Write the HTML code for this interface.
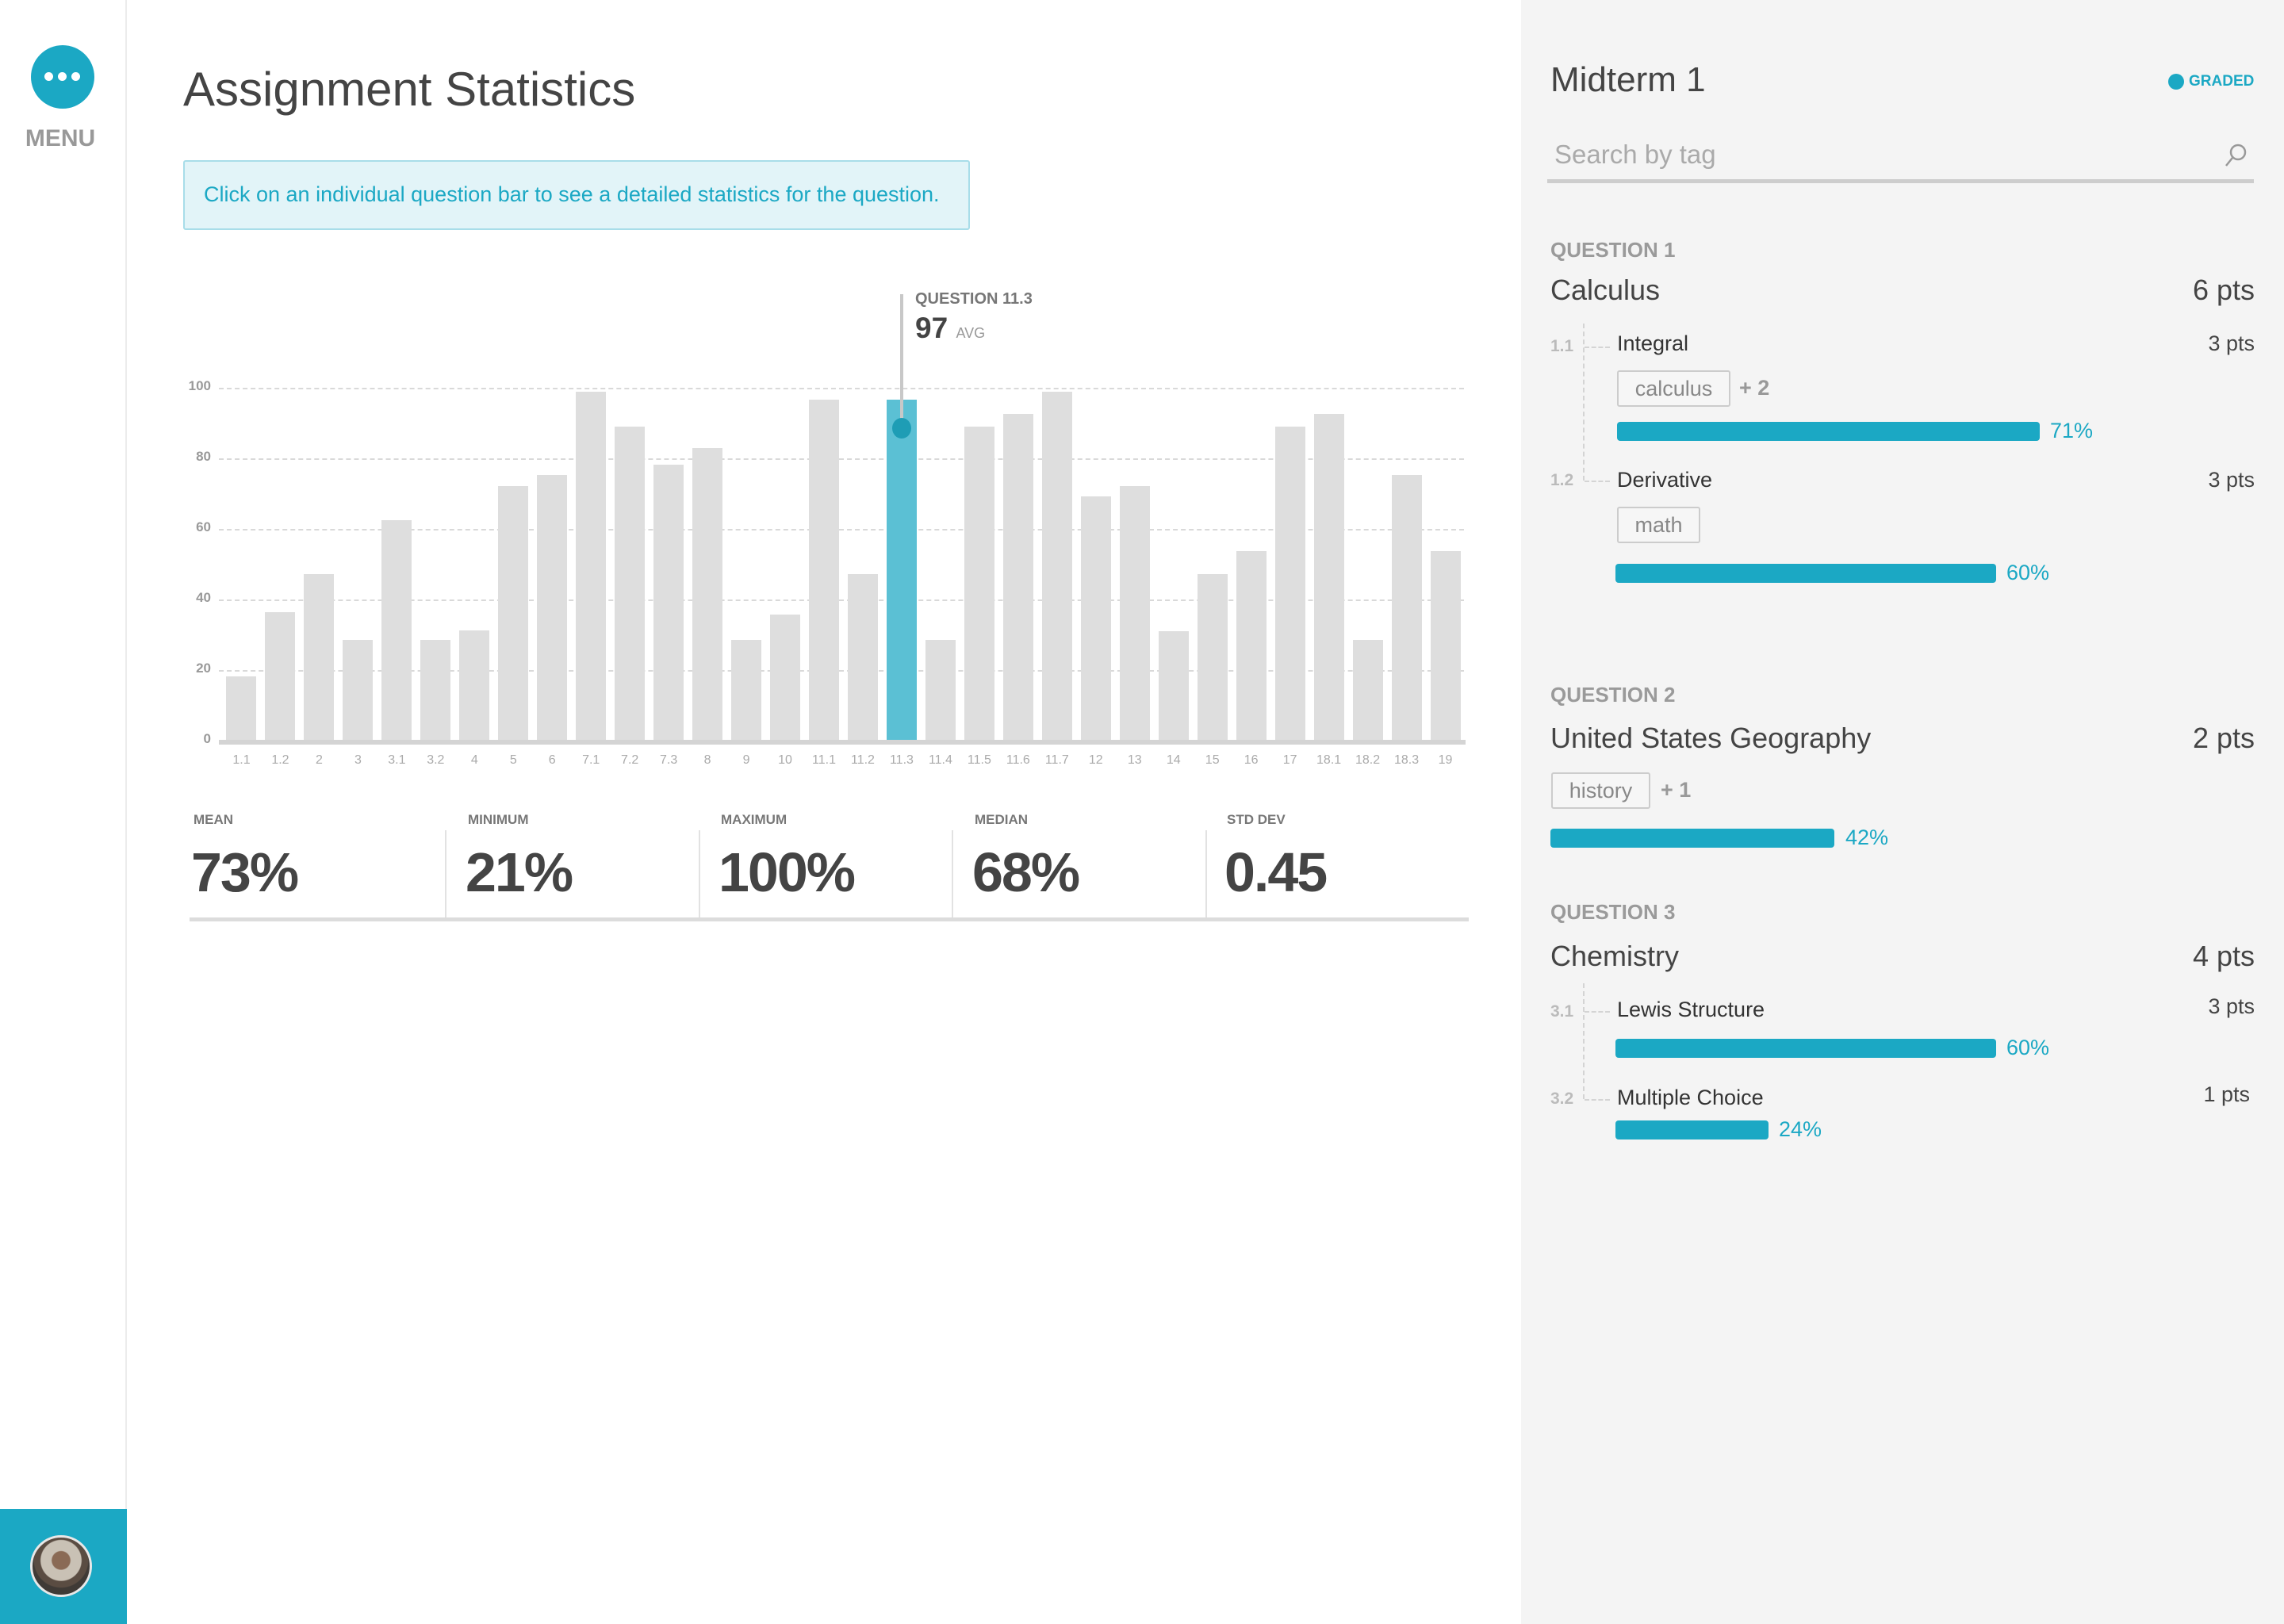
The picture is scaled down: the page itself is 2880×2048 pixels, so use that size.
<!DOCTYPE html>
<html><head><meta charset="utf-8"><style>
*{margin:0;padding:0;box-sizing:border-box}
body{width:2880px;height:2048px;position:relative;background:#fff;font-family:"Liberation Sans",sans-serif;overflow:hidden}
.a{position:absolute}
.side{left:0;top:0;width:160px;height:2048px;border-right:2px solid #ececec;background:#fff}
.grid{left:276px;width:1570px;border-top:2px dashed #d9d9d9;height:0}
.yl{left:226px;width:40px;text-align:right;font-size:17px;color:#999;font-weight:bold}
.bars{left:280px;top:400px;width:1567px;height:535px;display:flex;align-items:flex-end}
.bars div{flex:1;display:flex;justify-content:center;align-items:flex-end;height:100%}
.bars span{width:38px;background:#dedede;display:block}
.xl{left:280px;top:950px;width:1567px;display:flex;font-size:16px;color:#aaa}
.xl span{flex:1;text-align:center}
.sl{font-size:17px;font-weight:bold;color:#777;top:1024px}
.sv{font-size:70px;font-weight:bold;color:#444;top:1060px;letter-spacing:-2px}
.sep{top:1047px;width:2px;height:112px;background:#e2e2e2}
.right{left:1918px;top:0;width:962px;height:2048px;background:#f4f4f4}
.qh{font-size:26px;font-weight:bold;color:#9a9a9a;left:1955px}
.qt{font-size:36px;color:#444;left:1955px}
.pts{right:38px;color:#444}
.sub{font-size:27px;color:#333;left:2039px}
.num{font-size:21px;color:#bbb;font-weight:bold;left:1955px}
.tag{border:2px solid #ccc;border-radius:3px;font-size:27px;color:#888;text-align:center;background:#f6f6f6}
.plus{font-size:27px;color:#999;font-weight:bold}
.bar{background:#1ba8c4;border-radius:4px;height:24px}
.pct{font-size:27px;color:#1ba8c4}
.vl{border-left:2px dashed #d4d4d4;width:0;left:1996px}
.hl{border-top:2px dashed #d4d4d4;width:32px;height:0;left:1998px}
</style></head><body>
<div class="a side"></div>
<div class="a" style="left:39px;top:57px;width:80px;height:80px;border-radius:50%;background:#1ba8c4"></div>
<div class="a" style="left:56px;top:91px;width:11px;height:11px;border-radius:50%;background:#fff"></div>
<div class="a" style="left:73px;top:91px;width:11px;height:11px;border-radius:50%;background:#fff"></div>
<div class="a" style="left:90px;top:91px;width:11px;height:11px;border-radius:50%;background:#fff"></div>
<div class="a" style="left:0;top:158px;width:152px;text-align:center;font-size:30px;font-weight:bold;color:#999">MENU</div>
<div class="a" style="left:0;top:1903px;width:160px;height:145px;background:#1ba8c4"></div>
<div class="a" style="left:38px;top:1936px;width:78px;height:78px;border-radius:50%;background:radial-gradient(circle at 50% 40%,#8a6a55 0 20%,#c9c1b5 22% 45%,#5a4c42 47% 60%,#3f3a36 62%);border:3px solid #e8e8e8"></div>

<div class="a" style="left:231px;top:78px;font-size:60px;color:#444">Assignment Statistics</div>
<div class="a" style="left:231px;top:202px;width:992px;height:88px;background:#e2f4f8;border:2px solid #a8dde9;border-radius:3px"></div>
<div class="a" style="left:257px;top:230px;font-size:27px;color:#1ba8c4">Click on an individual question bar to see a detailed statistics for the question.</div>

<div class="a grid" style="top:489px"></div><div class="a yl" style="top:477px">100</div>
<div class="a grid" style="top:578px"></div><div class="a yl" style="top:566px">80</div>
<div class="a grid" style="top:667px"></div><div class="a yl" style="top:655px">60</div>
<div class="a grid" style="top:756px"></div><div class="a yl" style="top:744px">40</div>
<div class="a grid" style="top:845px"></div><div class="a yl" style="top:833px">20</div>
<div class="a yl" style="top:922px">0</div>

<div class="a bars">
<div><span style="height:82px"></span></div><div><span style="height:163px"></span></div><div><span style="height:211px"></span></div><div><span style="height:128px"></span></div>
<div><span style="height:279px"></span></div><div><span style="height:128px"></span></div><div><span style="height:140px"></span></div><div><span style="height:322px"></span></div>
<div><span style="height:336px"></span></div><div><span style="height:441px"></span></div><div><span style="height:397px"></span></div><div><span style="height:349px"></span></div>
<div><span style="height:370px"></span></div><div><span style="height:128px"></span></div><div><span style="height:160px"></span></div><div><span style="height:431px"></span></div>
<div><span style="height:211px"></span></div><div><span style="height:431px;background:#5bc0d4"></span></div><div><span style="height:128px"></span></div><div><span style="height:397px"></span></div>
<div><span style="height:413px"></span></div><div><span style="height:441px"></span></div><div><span style="height:309px"></span></div><div><span style="height:322px"></span></div>
<div><span style="height:139px"></span></div><div><span style="height:211px"></span></div><div><span style="height:240px"></span></div><div><span style="height:397px"></span></div>
<div><span style="height:413px"></span></div><div><span style="height:128px"></span></div><div><span style="height:336px"></span></div><div><span style="height:240px"></span></div>
</div>
<div class="a" style="left:276px;top:933px;width:1572px;height:6px;background:#d4d4d4"></div>
<div class="a xl"><span>1.1</span><span>1.2</span><span>2</span><span>3</span><span>3.1</span><span>3.2</span><span>4</span><span>5</span><span>6</span><span>7.1</span><span>7.2</span><span>7.3</span><span>8</span><span>9</span><span>10</span><span>11.1</span><span>11.2</span><span>11.3</span><span>11.4</span><span>11.5</span><span>11.6</span><span>11.7</span><span>12</span><span>13</span><span>14</span><span>15</span><span>16</span><span>17</span><span>18.1</span><span>18.2</span><span>18.3</span><span>19</span></div>

<div class="a" style="left:1135px;top:371px;width:4px;height:170px;background:#c8c8c8"></div>
<div class="a" style="left:1125px;top:527px;width:24px;height:26px;border-radius:50%;background:#1e9db5"></div>
<div class="a" style="left:1154px;top:366px;font-size:20px;font-weight:bold;color:#777">QUESTION 11.3</div>
<div class="a" style="left:1154px;top:393px;font-size:37px;font-weight:bold;color:#444">97 <span style="font-size:18px;color:#999;font-weight:normal">AVG</span></div>

<div class="a sl" style="left:244px">MEAN</div>
<div class="a sl" style="left:590px">MINIMUM</div>
<div class="a sl" style="left:909px">MAXIMUM</div>
<div class="a sl" style="left:1229px">MEDIAN</div>
<div class="a sl" style="left:1547px">STD DEV</div>
<div class="a sv" style="left:241px">73%</div>
<div class="a sv" style="left:587px">21%</div>
<div class="a sv" style="left:906px">100%</div>
<div class="a sv" style="left:1226px">68%</div>
<div class="a sv" style="left:1544px">0.45</div>
<div class="a sep" style="left:561px"></div><div class="a sep" style="left:881px"></div><div class="a sep" style="left:1200px"></div><div class="a sep" style="left:1520px"></div>
<div class="a" style="left:239px;top:1157px;width:1613px;height:5px;background:#dcdcdc"></div>

<div class="a right"></div>
<div class="a" style="left:1955px;top:76px;font-size:44px;color:#444">Midterm 1</div>
<div class="a" style="left:2734px;top:93px;width:20px;height:20px;border-radius:50%;background:#1ba8c4"></div>
<div class="a" style="left:2760px;top:92px;font-size:19px;font-weight:bold;color:#1ba8c4">GRADED</div>
<div class="a" style="left:1960px;top:176px;font-size:33px;color:#aaa">Search by tag</div>
<svg class="a" style="left:2804px;top:180px" width="30" height="32" viewBox="0 0 30 32"><circle cx="18" cy="12" r="9" fill="none" stroke="#999" stroke-width="2.5"/><line x1="11" y1="19" x2="3" y2="29" stroke="#999" stroke-width="2.5"/></svg>
<div class="a" style="left:1951px;top:226px;width:891px;height:5px;background:#cdcdcd"></div>

<div class="a qh" style="top:300px">QUESTION 1</div>
<div class="a qt" style="top:345px;width:888px">Calculus<span class="a pts" style="right:0">6 pts</span></div>
<div class="a vl" style="top:408px;height:198px"></div>
<div class="a hl" style="top:437px"></div><div class="a num" style="top:425px">1.1</div>
<div class="a sub" style="top:418px;width:804px">Integral<span class="a pts" style="right:0">3 pts</span></div>
<div class="a tag" style="left:2039px;top:467px;width:143px;height:46px;line-height:42px">calculus</div>
<div class="a plus" style="left:2193px;top:474px">+ 2</div>
<div class="a bar" style="left:2039px;top:532px;width:533px"></div>
<div class="a pct" style="left:2585px;top:528px">71%</div>
<div class="a hl" style="top:606px"></div><div class="a num" style="top:594px">1.2</div>
<div class="a sub" style="top:590px;width:804px">Derivative<span class="a pts" style="right:0">3 pts</span></div>
<div class="a tag" style="left:2039px;top:639px;width:105px;height:46px;line-height:42px">math</div>
<div class="a bar" style="left:2037px;top:711px;width:480px"></div>
<div class="a pct" style="left:2530px;top:707px">60%</div>

<div class="a qh" style="top:861px">QUESTION 2</div>
<div class="a qt" style="top:910px;width:888px">United States Geography<span class="a pts" style="right:0">2 pts</span></div>
<div class="a tag" style="left:1956px;top:974px;width:125px;height:46px;line-height:42px">history</div>
<div class="a plus" style="left:2094px;top:981px">+ 1</div>
<div class="a bar" style="left:1955px;top:1045px;width:358px"></div>
<div class="a pct" style="left:2327px;top:1041px">42%</div>

<div class="a qh" style="top:1135px">QUESTION 3</div>
<div class="a qt" style="top:1185px;width:888px">Chemistry<span class="a pts" style="right:0">4 pts</span></div>
<div class="a vl" style="top:1240px;height:146px"></div>
<div class="a hl" style="top:1275px"></div><div class="a num" style="top:1264px">3.1</div>
<div class="a sub" style="top:1258px;width:804px">Lewis Structure<span class="a pts" style="right:0;top:-4px">3 pts</span></div>
<div class="a bar" style="left:2037px;top:1310px;width:480px"></div>
<div class="a pct" style="left:2530px;top:1306px">60%</div>
<div class="a hl" style="top:1386px"></div><div class="a num" style="top:1374px">3.2</div>
<div class="a sub" style="top:1369px;width:798px">Multiple Choice<span class="a pts" style="right:0;top:-4px">1 pts</span></div>
<div class="a bar" style="left:2037px;top:1413px;width:193px"></div>
<div class="a pct" style="left:2243px;top:1409px">24%</div>
</body></html>
